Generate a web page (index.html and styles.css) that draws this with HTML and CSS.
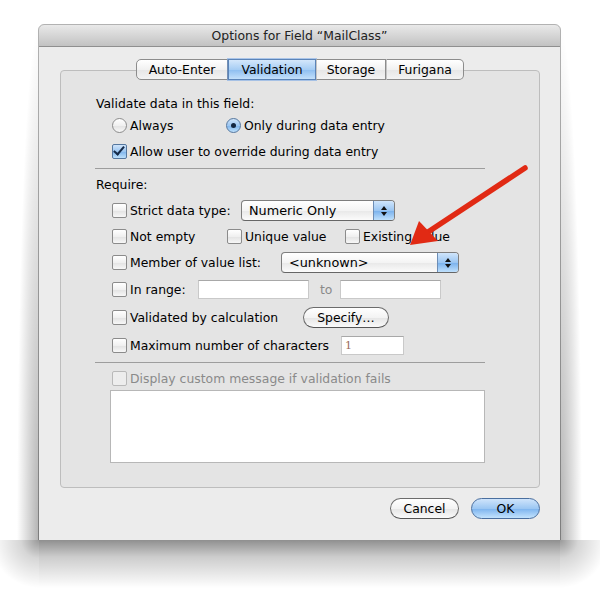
FILE: index.html
```html
<!DOCTYPE html>
<html lang="en">
<head>
  <meta charset="UTF-8">
  <title>Options for Field “MailClass”</title>
  <link rel="stylesheet" href="styles.css">
</head>
<body>
  <div class="window">
    <div class="titlebar">Options for Field “MailClass”</div>
    <div class="window-body">
      <div class="tabview">
        <div class="tabs">
          <span class="tab tab-auto">Auto-Enter</span>
          <span class="tab tab-valid selected">Validation</span>
          <span class="tab tab-storage">Storage</span>
          <span class="tab tab-furi">Furigana</span>
        </div>
        <div class="panel">
          <div class="row">Validate data in this field:</div>
          <div class="row indent row-radios">
            <label class="item w-always"><span class="radio"></span>Always</label>
            <label class="item"><span class="radio on"></span>Only during data entry</label>
          </div>
          <div class="row indent">
            <label class="item"><span class="check on"></span>Allow user to override during data entry</label>
          </div>
          <div class="sep"></div>

          <div class="row row-require">Require:</div>
          <div class="row indent">
            <label class="item w-strict"><span class="check"></span>Strict data type:</label>
            <div class="popup popup-type">Numeric Only<span class="popup-arrows"></span></div>
          </div>
          <div class="row indent">
            <label class="item w-notempty"><span class="check"></span>Not empty</label>
            <label class="item w-unique"><span class="check"></span>Unique value</label>
            <label class="item"><span class="check"></span>Existing value</label>
          </div>
          <div class="row indent">
            <label class="item w-member"><span class="check"></span>Member of value list:</label>
            <div class="popup popup-list">&lt;unknown&gt;<span class="popup-arrows"></span></div>
          </div>
          <div class="row indent row-range">
            <label class="item w-range"><span class="check"></span>In range:</label>
            <span class="field field-range"></span>
            <span class="to">to</span>
            <span class="field field-range2"></span>
          </div>
          <div class="row indent row-loose">
            <label class="item w-calc"><span class="check"></span>Validated by calculation</label>
            <span class="button btn-specify">Specify…</span>
          </div>
          <div class="row indent row-loose">
            <label class="item w-max"><span class="check"></span>Maximum number of characters</label>
            <span class="field field-max">1</span>
          </div>
          <div class="sep"></div>

          <div class="row row-require indent disabled">
            <label class="item"><span class="check off"></span>Display custom message if validation fails</label>
          </div>
          <div class="message"></div>
        </div>
      </div>

      <div class="buttons">
        <span class="button btn-cancel">Cancel</span>
        <span class="button default">OK</span>
      </div>
    </div>
  </div>

  <!-- red pointer drawn on top of the dialog -->
  <svg class="pointer" width="600" height="594" viewBox="0 0 600 594">
    <line x1="525" y1="168" x2="428" y2="232" stroke="#e12a14" stroke-width="5.5" stroke-linecap="round"/>
    <polygon points="410,245 419,221 438,241" fill="#e12a14"/>
  </svg>
</body>
</html>
```

FILE: styles.css
```css
/* the sheet's drop shadow is painted into the page background */
html {
  min-height: 100%;
  background:
    linear-gradient(rgba(0, 0, 0, 0.44), rgba(0, 0, 0, 0.2) 35%, rgba(0, 0, 0, 0)) 39px 540px / 521px 48px no-repeat,
    radial-gradient(circle 48px at 100% 0, rgba(0, 0, 0, 0.4), rgba(0, 0, 0, 0.16) 38%, rgba(0, 0, 0, 0)) -9px 540px / 48px 48px no-repeat,
    radial-gradient(circle 48px at 0 0, rgba(0, 0, 0, 0.4), rgba(0, 0, 0, 0.16) 38%, rgba(0, 0, 0, 0)) 560px 540px / 48px 48px no-repeat,
    radial-gradient(22px 515px at 100% 100%, rgba(0, 0, 0, 0.3), rgba(0, 0, 0, 0)) 17px 25px / 22px 515px no-repeat,
    radial-gradient(22px 515px at 0 100%, rgba(0, 0, 0, 0.3), rgba(0, 0, 0, 0)) 560px 25px / 22px 515px no-repeat,
    #fff;
}

body {
  margin: 0;
  padding: 25px 0 0 39px;
  font-family: "Lucida Grande", "DejaVu Sans", sans-serif;
  font-size: 12.4px;
  color: #000;
}

.window {
  width: 521px;
  height: 515px;
  background: #ececec;
  border-radius: 5px 5px 0 0;
  outline: 1px solid rgba(0, 0, 0, 0.3);
}

.titlebar {
  height: 21px;
  line-height: 22px;
  text-align: center;
  border-radius: 5px 5px 0 0;
  background: linear-gradient(#e9e9e9, #c2c2c2);
  border-bottom: 1px solid #8f8f8f;
  color: #222;
}

.window-body {
  padding: 12px 20px 0 21px;
}

/* tab view */
.tabs {
  display: flex;
  justify-content: center;
  height: 21px;
  position: relative;
  z-index: 1;
}
.tab {
  height: 19px;
  line-height: 19px;
  text-align: center;
  border: 1px solid #8c8c8c;
  border-left: 1px solid #c4c4c4;
  background: linear-gradient(#ffffff, #f1f1f1 50%, #e6e6e6 51%, #f3f3f3);
}
.tab-auto { width: 90px; border-left-color: #8c8c8c; border-radius: 5px 0 0 5px; }
.tab-valid { width: 86px; }
.tab-storage { width: 68px; }
.tab-furi { width: 76px; border-radius: 0 5px 5px 0; }
.tab.selected {
  background: linear-gradient(#d4e7fb, #a6cdf4 50%, #8cbdf0 51%, #c3e0fb);
  border-color: #5b84b8;
  outline: 1px solid rgba(90, 150, 230, 0.45);
}

.panel {
  margin-top: -10px;
  height: 394px;
  padding: 22px 54px 0 35px;
  background: #e4e4e4;
  border: 1px solid #bdbdbd;
  border-radius: 4px;
}

/* rows of controls */
.row {
  display: flex;
  align-items: center;
  height: 20px;
  margin-top: 6px;
  white-space: nowrap;
}
.row:first-child { margin-top: 0; }
.row-radios { margin-top: 2px; }
.row-require { margin-top: 5px; }
.row-range { margin-top: 7px; }
.row-loose { margin-top: 8px; }
.indent { padding-left: 16px; }

.item {
  display: flex;
  align-items: center;
}
.w-always { width: 114px; }
.w-strict { width: 129px; }
.w-notempty { width: 115px; }
.w-unique { width: 118px; }
.w-member { width: 169px; }
.w-range { width: 86px; }
.w-calc { width: 191px; }
.w-max { width: 229px; }

.sep {
  height: 1px;
  background: #9d9d9d;
  margin: 7px 0 0 -1px;
}

/* check boxes and radio buttons */
.check, .radio {
  width: 13px;
  height: 13px;
  margin-right: 3px;
  border: 1px solid #8b8b8b;
  background: linear-gradient(#ffffff, #f0f0f0 50%, #e2e2e2 51%, #f7f7f7);
  position: relative;
  flex: none;
}
.check { border-radius: 2px; }
.radio { border-radius: 50%; }
.check.on, .radio.on {
  border-color: #55779f;
  background: linear-gradient(#cfe4fa, #9cc6f1 50%, #7db3ec 51%, #bde0fb);
}
.check.on::after {
  content: "";
  position: absolute;
  left: 3px;
  top: -1px;
  width: 4px;
  height: 9px;
  border: solid #152a48;
  border-width: 0 2px 2px 0;
  transform: rotate(40deg);
}
.radio.on::after {
  content: "";
  position: absolute;
  left: 4px;
  top: 4px;
  width: 5px;
  height: 5px;
  border-radius: 50%;
  background: #132640;
}
.check.off {
  border-color: #b9b9b9;
  background: #ededed;
}

.disabled { color: #8a8a8a; }

/* pop-up menus */
.popup {
  position: relative;
  height: 19px;
  line-height: 19px;
  padding-left: 7px;
  border: 1px solid #7e7e7e;
  border-bottom-color: #666;
  border-radius: 4px;
  background: linear-gradient(#ffffff, #f4f4f4 50%, #e8e8e8 51%, #fbfbfb);
  font-size: 12.8px;
}
.popup-type { width: 145px; }
.popup-list { width: 169px; }
.popup-arrows {
  position: absolute;
  top: 0;
  right: 0;
  width: 20px;
  height: 19px;
  border-left: 1px solid #6d8db5;
  border-radius: 0 3px 3px 0;
  background: linear-gradient(#d0e5fb, #9bc6f2 50%, #78b0ec 51%, #bfe0fc);
}
.popup-arrows::before,
.popup-arrows::after {
  content: "";
  position: absolute;
  left: 7px;
  border-left: 3px solid transparent;
  border-right: 3px solid transparent;
}
.popup-arrows::before { top: 5px; border-bottom: 4px solid #111; }
.popup-arrows::after { top: 11px; border-top: 4px solid #111; }

/* text fields */
.field {
  display: block;
  height: 17px;
  line-height: 17px;
  background: #fff;
  border: 1px solid #c9c9c9;
  border-top-color: #a8a8a8;
}
.field-range { width: 109px; }
.field-range2 { width: 99px; }
.field-max {
  width: 58px;
  padding-left: 3px;
  color: #9a6b5b;
  font-family: "DejaVu Serif", serif;
  font-size: 11px;
}
.to {
  color: #8a8a8a;
  margin: 0 8px 0 11px;
}

.message {
  margin: 2px 0 0 14px;
  height: 71px;
  background: #fff;
  border: 1px solid #b7b7b7;
}

/* push buttons */
.button {
  display: inline-block;
  height: 19px;
  line-height: 19px;
  text-align: center;
  border: 1px solid #6c6c6c;
  border-bottom-color: #555;
  border-radius: 11px;
  background: linear-gradient(#ffffff, #f3f3f3 50%, #e5e5e5 51%, #fafafa);
}
.btn-specify { width: 84px; }
.buttons {
  display: flex;
  justify-content: flex-end;
  gap: 12px;
  margin-top: 10px;
}
.btn-cancel { width: 67px; }
.button.default {
  width: 67px;
  border-color: #4a6f9f;
  background: linear-gradient(#cfe4fb, #9cc7f3 50%, #7cb3ee 51%, #c3e3fd);
}

.pointer {
  position: absolute;
  left: 0;
  top: 0;
  pointer-events: none;
}
```
